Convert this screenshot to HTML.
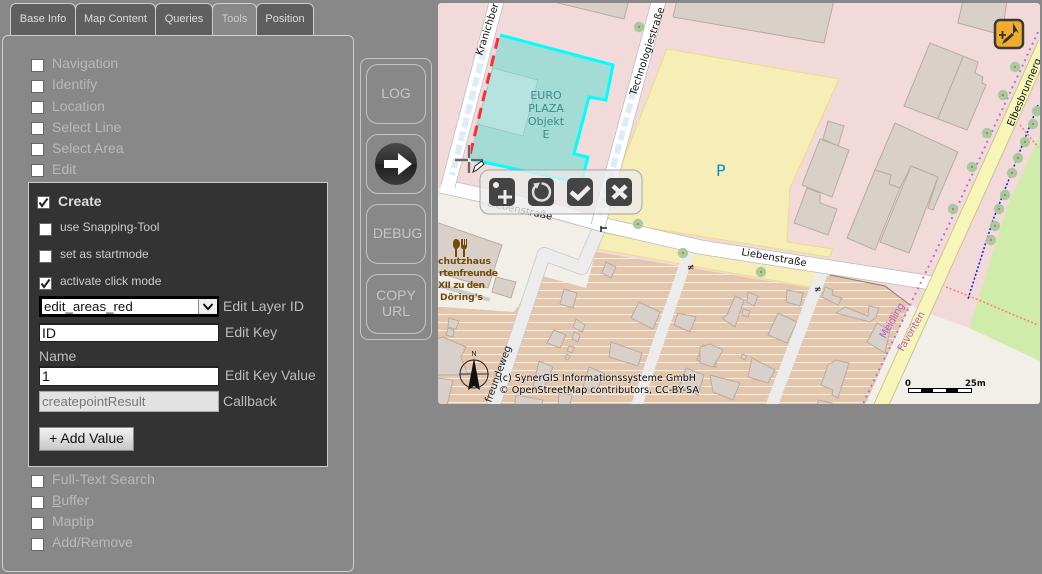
<!DOCTYPE html>
<html><head><meta charset="utf-8"><style>
*{box-sizing:border-box}
html,body{margin:0;padding:0}
body{width:1042px;height:574px;background:#888;position:relative;overflow:hidden;font-family:"Liberation Sans",sans-serif;color:#bbb}
.a{position:absolute;white-space:nowrap}
.tab{position:absolute;top:3px;height:33px;background:#5f5f5f;border:1px solid #ccc;border-bottom:0;border-radius:6px 6px 0 0;color:#ddd;font-size:11px;text-align:center;line-height:30px}
.panel{position:absolute;left:2px;top:35px;width:352px;height:537px;border:1px solid #ccc;border-radius:6px}
.cb{position:absolute;left:31px;width:13px;height:13px;background:#fff;border:1px solid #666}
.cb svg{position:absolute;left:0;top:0}
.l{position:absolute;left:52px;font-size:14px;line-height:16px;color:#b9b9b9;white-space:nowrap}
.w{font-size:12px;color:#ccc;line-height:14px;left:60px}
.f{position:absolute;left:39px;width:180px;background:#fff;color:#111;font-size:14px;white-space:nowrap}
.lb{position:absolute;font-size:14px;line-height:16px;color:#bdbdbd;white-space:nowrap}
.rb{position:absolute;left:366px;width:60px;height:60px;border:1px solid #c4c4c4;border-radius:12px;color:#c6c6c6;font-size:14px;text-align:center;line-height:16px}
</style></head><body>
<div class="tab" style="left:10px;width:66px">Base Info</div>
<div class="tab" style="left:75px;width:81px">Map Content</div>
<div class="tab" style="left:155px;width:58px">Queries</div>
<div class="tab" style="left:212px;width:45px;background:#888;color:#ccc">Tools</div>
<div class="tab" style="left:256px;width:58px">Position</div>
<div class="panel"></div>

<div class="cb" style="top:59px"></div><div class="l" style="top:55px">Navigation</div>
<div class="cb" style="top:80px"></div><div class="l" style="top:76px">Identify</div>
<div class="cb" style="top:101px"></div><div class="l" style="top:98px">Location</div>
<div class="cb" style="top:122px"></div><div class="l" style="top:119px">Select Line</div>
<div class="cb" style="top:143px"></div><div class="l" style="top:140px">Select Area</div>
<div class="cb" style="top:164px"></div><div class="l" style="top:161px">Edit</div>

<div class="a" style="left:28px;top:182px;width:300px;height:285px;background:#333;border:1px solid #ccc"></div>
<div class="cb" style="left:37px;top:196px;"><svg width="11" height="11" viewBox="0 0 11 11"><path d="M1.5 5.5L4 9L9.5 1.5" fill="none" stroke="#222" stroke-width="2"/></svg></div>
<div class="lb" style="left:58px;top:193px;font-weight:bold;color:#ddd">Create</div>
<div class="cb" style="left:39px;top:223px"></div><div class="l w" style="top:220px">use Snapping-Tool</div>
<div class="cb" style="left:39px;top:250px"></div><div class="l w" style="top:247px">set as startmode</div>
<div class="cb" style="left:39px;top:277px"><svg width="11" height="11" viewBox="0 0 11 11"><path d="M1.5 5.5L4 9L9.5 1.5" fill="none" stroke="#222" stroke-width="2"/></svg></div><div class="l w" style="top:274px">activate click mode</div>

<div class="f" style="top:296px;height:21px;border:3px solid #000;line-height:15px;padding-left:2px;font-size:13.3px;overflow:visible">edit_areas_red
<div style="position:absolute;right:-1px;top:0;width:19px;height:15px;background:#eee;border-left:1px solid #888"><svg width="18" height="15"><path d="M4.5 5L9 10L13.5 5" fill="none" stroke="#111" stroke-width="2"/></svg></div></div>
<div class="lb" style="left:223px;top:298px">Edit Layer ID</div>
<div class="f" style="top:323px;height:19px;border:1px solid #222;border-top-width:2px;line-height:16px;padding-left:2px">ID</div>
<div class="lb" style="left:225px;top:324px">Edit Key</div>
<div class="lb" style="left:39px;top:348px">Name</div>
<div class="f" style="top:366px;height:20px;border:1px solid #222;border-top-width:2px;line-height:17px;padding-left:2px">1</div>
<div class="lb" style="left:225px;top:367px">Edit Key Value</div>
<div class="f" style="top:391px;height:21px;background:#e2e2e2;border:1px solid #aaa;color:#777;line-height:19px;padding-left:2px;font-size:13.3px">createpointResult</div>
<div class="lb" style="left:223px;top:393px">Callback</div>
<div class="a" style="left:39px;top:427px;width:95px;height:24px;background:linear-gradient(#f2f2f2,#c8c8c8);border:1px solid #888;color:#111;font-size:14px;text-align:center;line-height:21px">+ Add Value</div>

<div class="cb" style="top:475px"></div><div class="l" style="top:471px;letter-spacing:.12px">Full-Text Search</div>
<div class="cb" style="top:496px"></div><div class="l" style="top:492px"><u>B</u>uffer</div>
<div class="cb" style="top:517px"></div><div class="l" style="top:513px">Maptip</div>
<div class="cb" style="top:538px"></div><div class="l" style="top:534px">Add/Remove</div>

<div class="a" style="left:360px;top:58px;width:72px;height:282px;border:1px solid #c4c4c4;border-radius:8px"></div>
<div class="rb" style="top:64px;line-height:56px">LOG</div>
<div class="rb" style="top:134px"></div>
<div class="a" style="left:375px;top:143px;width:42px;height:42px;border-radius:50%;background:linear-gradient(#4a4a4a 0,#2c2c2c 50%,#1f1f1f 52%,#3b3b3b 100%)"></div>
<svg class="a" style="left:375px;top:143px" width="42" height="42"><path d="M9 17H23V10L37 21L23 32V25H9Z" fill="#fff"/></svg>
<div class="rb" style="top:204px;line-height:56px;padding-left:3px;letter-spacing:-.1px">DEBUG</div>
<div class="rb" style="top:274px;padding-top:12px">COPY<br>URL</div>

<svg class="a" style="left:0;top:0" width="1042" height="574" viewBox="0 0 1042 574">
<defs>
<clipPath id="m"><rect x="438" y="3" width="602" height="401" rx="3"/></clipPath>
<pattern id="st" width="8" height="8" patternUnits="userSpaceOnUse" y="1"><rect width="8" height="8" fill="#e3c6ab"/><rect y="1" width="8" height="1" fill="#f6ede5"/></pattern>
<filter id="b" filterUnits="userSpaceOnUse" x="430" y="0" width="612" height="410" color-interpolation-filters="sRGB"><feGaussianBlur stdDeviation=".35"/></filter>
</defs>
<g clip-path="url(#m)" font-family="'DejaVu Sans',sans-serif">
<g filter="url(#b)">
<rect x="430" y="0" width="612" height="410" fill="#f1dad9"/>
<!-- land areas -->
<polygon points="430,186 600,232 586,290 539,275 514,312 430,306" fill="#f2efe9"/>
<polygon points="969,328 1008,205 1042,130 1042,362" fill="#d0ecab"/>
<polygon points="910,305 933,315 969,328 1042,362 1042,410 860,410" fill="#f2efe9"/>
<polygon points="667,49 839,79 790,188 787,242 833,249 829,257 600,220" fill="#f7eeb7" stroke="#f0dc82" stroke-width="1"/>
<polygon points="603,233 818,270 810,287 598,249" fill="#f7eeb7" stroke="#f0dc82" stroke-width="1"/>
<polygon points="596,252 810,288 830,275 885,286 910,305 863,410 430,410 430,306 514,312 539,275 586,288" fill="url(#st)"/>
<polyline points="830,275 885,286 910,305" fill="none" stroke="#8b7a6c"/>
<!-- buildings -->
<g fill="#d9d0c9" stroke="#b9aca2" stroke-width="1">
<polygon points="546,0 629,0 624,19"/>
<polygon points="677,0 834,0 824,43 673,17"/>
<polygon points="963,0 1007,0 1002,35 958,23"/>
<polygon points="930,43 978,62 975,73 983,77 982,83 986,85 967,130 904,106"/>
<polyline points="963,57 938,118" fill="none"/>
<polygon points="895,123 958,152 933,210 928,208 938,177 911,166 900,188 889,184 891,175 875,170"/>
<polygon points="875,170 891,175 889,184 900,188 875,250 847,238"/>
<polygon points="911,166 938,177 909,253 880,242"/>
<polygon points="828,121 844,126 838,146 823,139"/>
<polygon points="820,139 849,150 832,197 802,185"/>
<polygon points="807,188 820,193 820,203 837,209 828,235 794,223"/>
<polygon points="430,220 502,245 488,288 430,270"/>
<polygon points="496,277 516,282 511,298 492,292"/>
<polygon points="606,262 616,267 611,278 602,273"/>
<polygon points="564,289 577,293 573,308 560,304"/>
<polygon points="639,302 660,312 653,329 631,318"/>
<polygon points="678,313 696,317 690,332 674,325"/>
<polygon points="576,319 585,325 582,332 573,327"/>
<polygon points="554,330 566,335 560,348 547,343"/>
<polygon points="574,332 580,335 578,342 572,339"/>
<polygon points="569,346 574,347 572,353 567,351"/>
<polygon points="567,354 570,356 568,360 565,359"/>
<polygon points="611,342 642,353 638,366 609,357"/>
<polygon points="449,318 459,321 456,329 448,327"/>
<polygon points="448,328 454,330 453,337 446,335"/>
<polygon points="443,337 466,347 461,357 468,375 430,375 430,340"/>
<polygon points="430,377 453,380 446,410 430,410"/>
<polygon points="539,361 553,367 543,390 533,387"/>
<polygon points="589,367 604,373 596,393 583,387"/>
<polygon points="703,345 716,350 716,367 697,360"/>
<polygon points="686,368 704,375 698,395 679,387"/>
<polygon points="559,392 572,395 569,410 558,410"/>
<polygon points="516,395 543,400 541,410 514,410"/>
<polygon points="825,287 833,290 832,295 842,298 838,305 822,297"/>
<polygon points="787,290 803,293 800,306 786,302"/>
<polygon points="748,292 758,296 754,306 747,302"/>
<polygon points="735,296 744,300 735,327 722,318 727,315"/>
<polygon points="743,309 750,311 748,317 742,315"/>
<polygon points="778,313 797,322 787,343 768,335"/>
<polygon points="845,307 868,316 869,306 879,308 876,317 870,322 836,313"/>
<polygon points="877,323 890,330 885,353 867,342"/>
<polygon points="836,360 849,363 838,398 832,395 833,390 821,385 828,365"/>
<polygon points="752,358 775,370 768,383 748,377"/>
<polygon points="710,375 740,383 733,400 713,392"/>
<polygon points="700,347 710,344 723,350 713,367 700,363"/>
<polygon points="742,354 747,356 745,360 741,358"/>
<polygon points="818,400 832,403 830,410 817,410"/>
</g>
<polyline points="490,300 430,283" fill="none" stroke="#aaa" stroke-width="4" opacity=".5"/>
<!-- paths / roads -->
<polyline points="598,231 582,268 544,254 492,410" fill="none" stroke="#c9c9c9" stroke-width="14" stroke-linejoin="round"/>
<polyline points="598,231 582,268 544,254 492,410" fill="none" stroke="#ececec" stroke-width="12.5" stroke-linejoin="round"/>
<line x1="690" y1="250" x2="635" y2="410" stroke="#ececec" stroke-width="11"/>
<line x1="823" y1="270" x2="770" y2="410" stroke="#ececec" stroke-width="12"/>
<polyline points="441,186 551,210 600,224 700,247 932,283" fill="none" stroke="#bbb" stroke-width="15"/>
<polyline points="441,186 551,210 600,224 700,247 932,283" fill="none" stroke="#fff" stroke-width="13.5"/>
<line x1="497" y1="0" x2="448" y2="186" stroke="#bbb" stroke-width="15"/>
<line x1="497" y1="0" x2="448" y2="186" stroke="#fff" stroke-width="13.5"/>
<line x1="659" y1="0" x2="598" y2="226" stroke="#bbb" stroke-width="15"/>
<line x1="659" y1="0" x2="598" y2="226" stroke="#fff" stroke-width="13.5"/>
<line x1="484" y1="50" x2="452" y2="175" stroke="#dcecf8" stroke-width="6" stroke-dasharray="10 4"/>
<line x1="634" y1="90" x2="600" y2="215" stroke="#dcecf8" stroke-width="6" stroke-dasharray="10 4"/>
<polyline points="1045,43 879,410" fill="none" stroke="#cbc48e" stroke-width="15"/>
<polyline points="1045,43 879,410" fill="none" stroke="#f7f6b8" stroke-width="13"/>
<polyline points="1038,32 953,216 910,305 860,410" fill="none" stroke="#bb72cc" stroke-width="2" stroke-dasharray="2 4"/>
<polyline points="1038,105 993,220 968,299" fill="none" stroke="#1a1ae0" stroke-width="1.5" stroke-dasharray="2 2"/>
<polyline points="946,287 969,296 1038,325" fill="none" stroke="#fa8072" stroke-width="1.5" stroke-dasharray="2 2"/>
<polyline points="1020,125 1038,147" fill="none" stroke="#fa8072" stroke-width="1.5" stroke-dasharray="2 2"/>
<!-- trees -->
<g fill="#a8c99b" opacity=".95">
<circle cx="1015" cy="67" r="5.2"/><circle cx="1003" cy="95" r="5.2"/><circle cx="987" cy="133" r="5.2"/><circle cx="972" cy="167" r="5.2"/><circle cx="953" cy="209" r="5.2"/><circle cx="1037" cy="111" r="5.2"/><circle cx="1033" cy="124" r="5.2"/><circle cx="1025" cy="142" r="5.2"/><circle cx="1018" cy="158" r="5.2"/><circle cx="1012" cy="173" r="5.2"/><circle cx="1005" cy="195" r="5.2"/><circle cx="999" cy="209" r="5.2"/><circle cx="995" cy="226" r="5.2"/><circle cx="991" cy="240" r="5.2"/><circle cx="639" cy="27" r="5.2"/><circle cx="638" cy="224" r="5.2"/><circle cx="683" cy="253" r="5.2"/><circle cx="761" cy="272" r="5.2"/>
</g>
<g fill="#b0714a">
<circle cx="1015" cy="67" r="1"/><circle cx="1003" cy="95" r="1"/><circle cx="987" cy="133" r="1"/><circle cx="972" cy="167" r="1"/><circle cx="953" cy="209" r="1"/><circle cx="1033" cy="124" r="1"/><circle cx="1025" cy="142" r="1"/><circle cx="1018" cy="158" r="1"/><circle cx="1012" cy="173" r="1"/><circle cx="1005" cy="195" r="1"/><circle cx="999" cy="209" r="1"/><circle cx="995" cy="226" r="1"/><circle cx="991" cy="240" r="1"/><circle cx="639" cy="27" r="1"/><circle cx="638" cy="224" r="1"/><circle cx="683" cy="253" r="1"/><circle cx="761" cy="272" r="1"/>
</g>
<!-- edited polygon -->
<polygon points="500,35 613,65 606,100 589,97 574,154 588,157 581,183 469,159" fill="#a3dcd4"/>
<polygon points="493,68 538,80 523,136 477,124" fill="#b5e3df" stroke="#8fc5bf" stroke-width=".7"/>
<polyline points="469,159 581,183 588,157 574,154 589,97 606,100 613,65 500,35" fill="none" stroke="#00ffff" stroke-width="3"/>
<line x1="498" y1="38" x2="469" y2="159" stroke="#ff2a36" stroke-width="3" stroke-dasharray="11 7"/>
<g fill="#3f8a8a" font-size="11" text-anchor="middle">
<text x="546" y="99">EURO</text><text x="546" y="112">PLAZA</text><text x="546" y="125">Objekt</text><text x="546" y="138">E</text>
</g>
<text x="716" y="176" fill="#0092da" font-size="16">P</text>
<!-- road labels -->
<g fill="#111" font-size="10">
<text transform="translate(482,56) rotate(-72)">Kranichber</text>
<text transform="translate(636,96) rotate(-72)" textLength="92">Technologiestraße</text>
<text transform="translate(741,255) rotate(10)" textLength="66">Liebenstraße</text>
<text transform="translate(1013,127) rotate(-67)">Elbesbrunnerg</text>
<text transform="translate(487,206) rotate(12)" textLength="66">Liebenstraße</text>
<text transform="translate(491,403) rotate(-70)" fill="#222">freundeweg</text>
<text x="687" y="270" font-size="9">≠</text><text x="814" y="292" font-size="9">≠</text>
</g>
<path d="M601 226V232M601 228H607" stroke="#222" stroke-width="1.5" fill="none"/>
<g fill="#b65cc8" font-size="10">
<text transform="translate(885,339) rotate(-60)" textLength="39">Meidling</text>
<text transform="translate(903,352) rotate(-60)" textLength="44">Favoriten</text>
</g>
<!-- restaurant -->
<g fill="#734a08">
<path d="M456 239c-2 0-3 2-3 5s1 4 2 5v8h2v-8c1-1 3-2 3-5s-2-5-4-5z"/>
<path d="M461 239v7c0 2 1 3 2 3v8h2v-8c1 0 2-1 2-3v-7h-1v6h-1v-6h-1v6h-1v-6z"/>
<g font-size="9.2" font-weight="bold">
<text x="438" y="264" textLength="53">chutzhaus</text><text x="439" y="276" textLength="59">rtenfreunde</text><text x="438" y="288" textLength="47">XII zu den</text><text x="440" y="300" textLength="43">Döring's</text>
</g></g>
</g>
<!-- compass -->
<circle cx="474" cy="374" r="14" fill="none" stroke="#222" stroke-width="1"/>
<line x1="459" y1="374" x2="489" y2="374" stroke="#333"/>
<path d="M474 358L468 390L474 386L480 390Z" fill="#111"/>
<text x="474" y="356" font-size="7" text-anchor="middle" font-family="'Liberation Sans',sans-serif" fill="#111">N</text>
<g font-size="10" fill="#000" stroke="#fff" stroke-width="1.5" paint-order="stroke" stroke-opacity=".5">
<text x="499" y="381" textLength="197" lengthAdjust="spacingAndGlyphs">(c) SynerGIS Informationssysteme GmbH</text>
<text x="499" y="393" textLength="200" lengthAdjust="spacingAndGlyphs">© OpenStreetMap contributors, CC-BY-SA</text>
</g>
<!-- scalebar -->
<rect x="908.5" y="388.5" width="63" height="4" fill="#fff" stroke="#000"/>
<rect x="921" y="388" width="12" height="5" fill="#000"/><rect x="946" y="388" width="12" height="5" fill="#000"/>
<g font-size="8.5" font-weight="bold" fill="#111"><text x="905" y="386">0</text><text x="965" y="386">25m</text></g>
<!-- cursor cross -->
<path d="M455 160H483M469 145V173" stroke="#fff" stroke-width="4" opacity=".5"/>
<path d="M455 160H468M471 160H483M469 145V158M469 162V173" stroke="#666" stroke-width="2.5"/>
<path d="M473 172L475 166L482 161L484 164L477 170Z" fill="#fff" stroke="#222" stroke-width="1"/>
<!-- toolbar -->
<rect x="480" y="170" width="162" height="44" rx="9" fill="#ececec" fill-opacity=".78" stroke="#a5a5a5"/>
<g fill="#444"><rect x="489" y="178" width="26" height="28" rx="5"/><rect x="528" y="178" width="26" height="28" rx="5"/><rect x="567" y="178" width="26" height="28" rx="5"/><rect x="606" y="178" width="26" height="28" rx="5"/></g>
<circle cx="496" cy="185" r="3" fill="#eee"/>
<path d="M505 190V204M498 197H512" stroke="#eee" stroke-width="3"/>
<path d="M535.5 186A8.5 8.5 0 1 0 541.5 183.5" fill="none" stroke="#ddd" stroke-width="2.5"/>
<path d="M533 183.5L540 182.5L537 189Z" fill="#ddd"/>
<path d="M571 192L578 198L589 187" fill="none" stroke="#eee" stroke-width="4.5"/>
<path d="M613 186L626 198M626 186L613 198" stroke="#eee" stroke-width="4.5"/>
<!-- top-right button -->
<rect x="995" y="20" width="28" height="28" rx="5" fill="#f0ac2a" stroke="#3a3a3a" stroke-width="2.5"/>
<path d="M1013 23L1013 34L1016 31L1019 33Z" fill="#333"/>
<path d="M999 35H1006M1002.5 31V39" stroke="#333" stroke-width="1.8"/>
<path d="M1002 44L1004 40L1012 33L1014 35L1006 42Z" fill="#333"/>
</g>
</svg>
</body></html>
